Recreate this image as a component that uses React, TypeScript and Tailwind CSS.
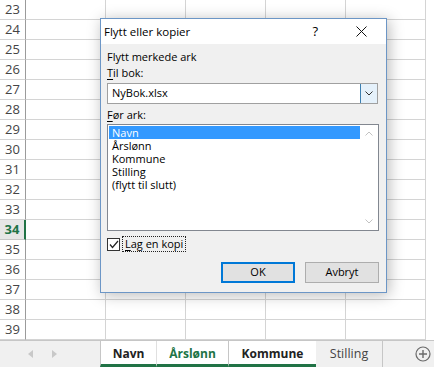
const rows = [23, 24, 25, 26, 27, 28, 29, 30, 31, 32, 33, 34, 35, 36, 37, 38, 39];
const sheets = ["Navn", "Årslønn", "Kommune", "Stilling", "(flytt til slutt)"];

function GridRow({ n }: { n: number }) {
  const active = n === 34;
  return (
    <div className="flex h-[20px]">
      <div
        className={
          active
            ? "w-[26px] h-full flex items-center justify-center border-b border-[#c6c6c6] border-r-2 border-r-[#217346] bg-[#e6e6e6] text-[#217346] font-bold text-[13px]"
            : "w-[26px] h-full flex items-center justify-center border-b border-[#d4d4d4] border-r border-r-[#9b9b9b] text-[#444] text-[13px]"
        }
      >
        {n}
      </div>
      {[0, 1, 2, 3, 4].map((c) => (
        <div key={c} className="w-[80px] h-full shrink-0 border-b border-r border-[#d4d4d4]" />
      ))}
    </div>
  );
}

function Dialog() {
  return (
    <div className="absolute left-[100px] top-[18px] w-[287px] h-[275px] border border-[#6c96c6] bg-[#f0f0f0] shadow-[2px_2px_14px_rgba(0,0,0,0.28)] flex flex-col text-[11px] text-black">
      {/* Title bar */}
      <div className="h-[25px] bg-white flex items-center pl-[3px] shrink-0">
        <span className="text-[11.5px]">Flytt eller kopier</span>
        <span className="ml-auto mr-[38px] text-[13px]">?</span>
        <svg width="11" height="11" viewBox="0 0 11 11" className="mr-[19px]">
          <path d="M0.5 0.5l10 10M10.5 0.5l-10 10" stroke="#111" strokeWidth="1" />
        </svg>
      </div>

      {/* Body */}
      <div className="flex flex-col px-[6px] pt-[5px]">
        <div className="h-[16px] leading-[16px]">Flytt merkede ark</div>
        <div className="h-[16px] leading-[16px]">
          <span className="underline underline-offset-2">T</span>il bok:
        </div>
        <div className="mt-[2px] h-[21px] w-[271px] bg-white border border-[#a0a0a0] flex items-center">
          <span className="pl-[4px]">NyBok.xlsx</span>
          <div className="ml-auto h-full w-[17px] bg-[#e5f1fb] border-l border-[#3c7fb1] flex items-center justify-center">
            <svg width="8" height="5" viewBox="0 0 8 5">
              <path d="M0.5 0.5l3.5 3.5 3.5-3.5" stroke="#333" fill="none" strokeWidth="1" />
            </svg>
          </div>
        </div>
        <div className="mt-[3px] h-[16px] leading-[16px]">
          <span className="underline underline-offset-2">F</span>ør ark:
        </div>
        <div className="mt-[1px] h-[107px] w-[272px] bg-white border border-[#828790] flex">
          <div className="flex-1 pt-[1px] pl-[1px]">
            {sheets.map((s, i) => (
              <div
                key={s}
                className={
                  i === 0
                    ? "h-[13px] leading-[13px] pl-[3px] bg-[#3399ff] text-white"
                    : "h-[13px] leading-[13px] pl-[3px]"
                }
              >
                {s}
              </div>
            ))}
          </div>
          <div className="w-[18px] flex flex-col items-center justify-between py-[6px]">
            <svg width="8" height="5" viewBox="0 0 8 5">
              <path d="M0.5 4.5l3.5-3.5 3.5 3.5" stroke="#c2c2c2" fill="none" strokeWidth="1" />
            </svg>
            <svg width="8" height="5" viewBox="0 0 8 5">
              <path d="M0.5 0.5l3.5 3.5 3.5-3.5" stroke="#c2c2c2" fill="none" strokeWidth="1" />
            </svg>
          </div>
        </div>

        <div className="mt-[5px] h-[16px] flex items-center">
          <div className="w-[13px] h-[13px] border border-[#333] bg-white flex items-center justify-center">
            <svg width="10" height="9" viewBox="0 0 10 9">
              <path d="M1 4.5l2.5 3 5.5-6.5" stroke="#222" fill="none" strokeWidth="1.2" />
            </svg>
          </div>
          <div className="ml-[2px] h-[16px] px-[2px] border border-dotted border-[#222] flex items-center">
            <span className="underline underline-offset-2">L</span>ag en kopi
          </div>
        </div>

        <div className="mt-[10px] flex justify-end gap-[10px] pr-[1px]">
          <button className="w-[74px] h-[21px] bg-[#e1e1e1] border-2 border-[#0078d7] flex items-center justify-center">
            OK
          </button>
          <button className="w-[74px] h-[21px] bg-[#e1e1e1] border border-[#adadad] flex items-center justify-center">
            Avbryt
          </button>
        </div>
      </div>
    </div>
  );
}

function TabBar() {
  return (
    <div className="h-[27px] bg-[#f0f0f0] border-t border-[#c6c6c6] flex text-[12px]">
      <div className="w-[100px] flex items-center pl-[28px] gap-[19px]">
        <svg width="5" height="8" viewBox="0 0 5 8">
          <path d="M5 0L0 4l5 4z" fill="#c8c8c8" />
        </svg>
        <svg width="5" height="8" viewBox="0 0 5 8">
          <path d="M0 0l5 4-5 4z" fill="#c8c8c8" />
        </svg>
      </div>
      <div className="flex h-full">
        <div className="w-[56px] h-full pt-[2px] bg-white border-l border-[#c6c6c6] border-b-[3px] border-b-[#217346] flex items-center justify-center font-bold text-[#222]">
          Navn
        </div>
        <div className="w-[72px] h-full pt-[2px] bg-white border-l border-[#e0e0e0] border-b-[3px] border-b-[#217346] flex items-center justify-center font-bold text-[#217346]">
          Årslønn
        </div>
        <div className="w-[88px] h-full pt-[2px] bg-white border-l border-[#c6c6c6] border-b-[3px] border-b-[#217346] flex items-center justify-center font-bold text-[#222]">
          Kommune
        </div>
        <div className="w-[67px] h-full border-r border-[#c6c6c6] flex items-center justify-center text-[#444] text-[12.5px]">
          Stilling
        </div>
      </div>
      <div className="ml-auto mr-[3px] flex items-center">
        <svg width="16" height="16" viewBox="0 0 16 16">
          <circle cx="8" cy="8" r="7" fill="none" stroke="#6a6a6a" strokeWidth="1.2" />
          <path d="M8 4v8M4 8h8" stroke="#6a6a6a" strokeWidth="1.4" />
        </svg>
      </div>
    </div>
  );
}

export default function App() {
  return (
    <div className="relative w-[434px] h-[367px] overflow-hidden bg-white font-['Segoe_UI','Open_Sans',sans-serif]">
      <div className="flex flex-col">
        {rows.map((n) => (
          <GridRow key={n} n={n} />
        ))}
      </div>
      <TabBar />
      <Dialog />
    </div>
  );
}
